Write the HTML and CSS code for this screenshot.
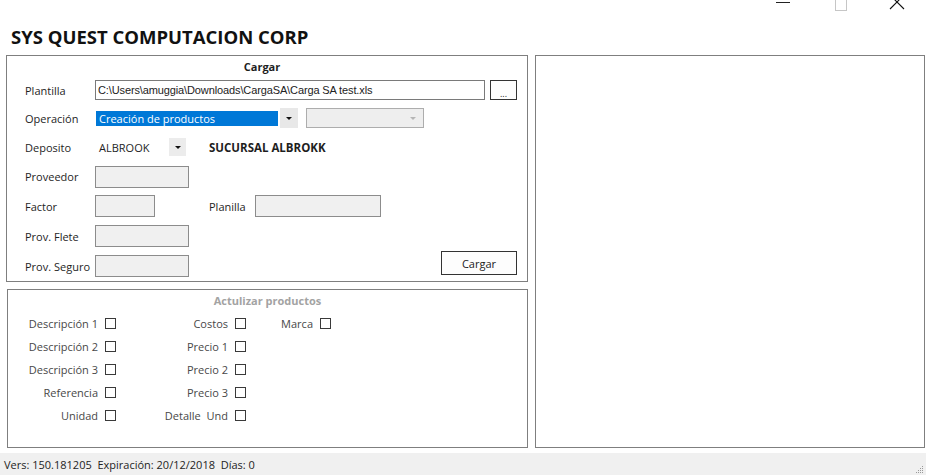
FILE: index.html
```html
<!DOCTYPE html>
<html lang="es">
<head>
    <meta charset="UTF-8">
    <title>Carga SA</title>
    <link rel="stylesheet" href="styles.css">
</head>
<body>
    <div class="caption">
        <div class="ctl"><span class="ctl-min"></span></div>
        <div class="ctl"><span class="ctl-max"></span></div>
        <div class="ctl ctl-last">
            <svg class="ctl-close" width="20" height="13" viewBox="0 0 20 13">
                <path d="M2 -3 L16 11 M16 -3 L2 11" stroke="#111" stroke-width="1.1" fill="none"/>
            </svg>
        </div>
    </div>

    <h1 class="app-title">SYS QUEST COMPUTACION CORP</h1>

    <div class="main">
        <div class="left">
            <div class="group cargar">
                <div class="group-title">Cargar</div>

                <div class="row">
                    <span class="lbl">Plantilla</span>
                    <input class="txt path" type="text" value="C:\Users\amuggia\Downloads\CargaSA\Carga SA test.xls">
                    <button class="btn browse">...</button>
                </div>

                <div class="row">
                    <span class="lbl">Operación</span>
                    <div class="combo op">
                        <span class="combo-sel">Creación de productos</span>
                        <span class="combo-arrow"><i class="tri"></i></span>
                    </div>
                    <div class="combo off">
                        <span class="combo-text"></span>
                        <i class="tri grey"></i>
                    </div>
                </div>

                <div class="row">
                    <span class="lbl">Deposito</span>
                    <div class="combo dep">
                        <span class="combo-text">ALBROOK</span>
                        <span class="combo-arrow"><i class="tri"></i></span>
                    </div>
                    <span class="sucursal">SUCURSAL ALBROKK</span>
                </div>

                <div class="row">
                    <span class="lbl">Proveedor</span>
                    <input class="txt w94" type="text" disabled>
                </div>

                <div class="row">
                    <span class="lbl">Factor</span>
                    <input class="txt w60" type="text" disabled>
                    <span class="lbl planilla">Planilla</span>
                    <input class="txt w126" type="text" disabled>
                </div>

                <div class="row">
                    <span class="lbl">Prov. Flete</span>
                    <input class="txt w94" type="text" disabled>
                </div>

                <div class="row">
                    <span class="lbl">Prov. Seguro</span>
                    <input class="txt w94" type="text" disabled>
                    <button class="btn cargar-btn">Cargar</button>
                </div>
            </div>

            <div class="group actualizar">
                <div class="group-title muted">Actulizar productos</div>
                <div class="checks">
                    <label class="chk">Descripción 1 <span class="box"></span></label>
                    <label class="chk">Costos <span class="box"></span></label>
                    <label class="chk">Marca <span class="box"></span></label>

                    <label class="chk">Descripción 2 <span class="box"></span></label>
                    <label class="chk">Precio 1 <span class="box"></span></label>
                    <span></span>

                    <label class="chk">Descripción 3 <span class="box"></span></label>
                    <label class="chk">Precio 2 <span class="box"></span></label>
                    <span></span>

                    <label class="chk">Referencia <span class="box"></span></label>
                    <label class="chk">Precio 3 <span class="box"></span></label>
                    <span></span>

                    <label class="chk">Unidad <span class="box"></span></label>
                    <label class="chk">Detalle&nbsp; Und <span class="box"></span></label>
                    <span></span>
                </div>
            </div>
        </div>

        <div class="panel"></div>
    </div>

    <div class="status">
        <span>Vers: 150.181205 &nbsp;Expiración: 20/12/2018 &nbsp;Días: 0</span>
        <svg class="grip" width="10" height="10" viewBox="0 0 10 10">
            <rect x="8" y="2" width="1" height="1" fill="#999"/>
            <rect x="6" y="4" width="1" height="1" fill="#999"/>
            <rect x="8" y="4" width="1" height="1" fill="#999"/>
            <rect x="4" y="6" width="1" height="1" fill="#999"/>
            <rect x="6" y="6" width="1" height="1" fill="#999"/>
            <rect x="8" y="6" width="1" height="1" fill="#999"/>
            <rect x="2" y="8" width="1" height="1" fill="#999"/>
            <rect x="4" y="8" width="1" height="1" fill="#999"/>
            <rect x="6" y="8" width="1" height="1" fill="#999"/>
            <rect x="8" y="8" width="1" height="1" fill="#999"/>
        </svg>
    </div>
</body>
</html>
```

FILE: styles.css
```css
body {
    margin: 0;
    padding: 0;
    background-color: #fff;
    font-family: "Open Sans", "Noto Sans", sans-serif;
    font-size: 11px;
    color: #1e1e1e;
    width: 926px;
    height: 475px;
    overflow: hidden;
}

/* window caption buttons */
.caption {
    height: 23px;
    display: flex;
    justify-content: flex-end;
    align-items: flex-start;
}

.ctl {
    width: 58px;
    display: flex;
    justify-content: center;
}

.ctl-last {
    width: 56px;
}

.ctl-min {
    display: block;
    width: 14px;
    height: 1px;
    margin-top: 2px;
    background-color: #222;
}

.ctl-max {
    display: block;
    width: 10px;
    height: 11px;
    margin-top: -2px;
    border: 1px solid #c6c6c6;
}

.ctl-close {
    display: block;
    margin-top: -2px;
}

.app-title {
    margin: 0 0 4px 11px;
    font-size: 18.5px;
    line-height: 28px;
    font-weight: 700;
    color: #111;
}

.main {
    display: flex;
    gap: 7px;
    padding-left: 6px;
    height: 393px;
}

.left {
    width: 522px;
    display: flex;
    flex-direction: column;
    gap: 7px;
}

.group {
    border: 1px solid #7f7f7f;
    box-sizing: border-box;
}

.group-title {
    text-align: center;
    font-weight: 700;
    color: #1e1e1e;
}

.group-title.muted {
    color: #a3a3a3;
}

/* Cargar */
.cargar {
    height: 227px;
    display: grid;
    grid-template-rows: 20px 28px 28px 30px 29px 30px 30px 30px;
    padding-right: 10px;
}

.cargar .group-title {
    line-height: 20px;
    padding-top: 1px;
}

.row {
    display: flex;
    align-items: center;
    padding-left: 18px;
}

.lbl {
    width: 70px;
    flex-shrink: 0;
}

.lbl.planilla {
    width: 46px;
    margin-left: 54px;
}

.txt {
    box-sizing: border-box;
    height: 22px;
    margin: 0;
    padding: 0 3px;
    border: 1px solid #8c8c8c;
    background-color: #f0f0f0;
    font-family: inherit;
    font-size: 11px;
}

.txt.path {
    width: 390px;
    height: 20px;
    background-color: #fff;
    border-color: #7a7a7a;
    font-family: "Liberation Sans", Arial, sans-serif;
    font-size: 11px;
    letter-spacing: -0.12px;
    color: #222;
    padding-left: 2px;
}

.w94 {
    width: 94px;
}

.w60 {
    width: 60px;
}

.w126 {
    width: 126px;
}

.btn {
    box-sizing: border-box;
    margin: 0;
    padding: 0;
    border: 1px solid #333;
    background-color: #fdfdfd;
    font-family: inherit;
    font-size: 11px;
    color: #222;
}

.browse {
    width: 27px;
    height: 20px;
    margin-left: 5px;
    font-size: 9px;
    line-height: 20px;
    padding-top: 3px;
}

.cargar-btn {
    width: 76px;
    height: 24px;
    margin-left: auto;
    align-self: flex-start;
}

.combo {
    display: flex;
    align-items: center;
    height: 20px;
    box-sizing: border-box;
}

.combo.op {
    width: 203px;
}

.combo-sel {
    width: 182px;
    height: 15px;
    margin: 1px 2px 0 1px;
    padding-left: 3px;
    box-sizing: border-box;
    background-color: #0078d7;
    color: #fff;
    line-height: 15px;
    white-space: nowrap;
}

.combo-arrow {
    width: 18px;
    height: 20px;
    background-color: #e8e8e8;
    display: flex;
    align-items: center;
    justify-content: center;
}

.tri {
    display: block;
    width: 0;
    height: 0;
    border-left: 3px solid transparent;
    border-right: 3px solid transparent;
    border-top: 3px solid #111;
}

.tri.grey {
    border-top-color: #b5b5b5;
    margin-right: 7px;
}

.combo.off {
    width: 118px;
    margin-left: 8px;
    border: 1px solid #adadad;
    background-color: #eeeeee;
}

.combo.off .combo-text {
    flex: 1;
}

.combo.dep {
    width: 92px;
}

.combo.dep .combo-text {
    flex: 1;
    padding-left: 4px;
}

.combo.dep .combo-arrow {
    width: 17px;
    height: 18px;
    margin-right: 1px;
    background-color: #ececec;
}

.sucursal {
    margin-left: 22px;
    font-weight: 700;
    font-size: 11.5px;
}

/* Actualizar productos */
.actualizar {
    height: 159px;
    margin-left: 1px;
}

.actualizar .group-title {
    line-height: 22px;
}

.checks {
    display: grid;
    grid-template-columns: 108px 130px 85px;
    grid-auto-rows: 23px;
}

.chk {
    display: flex;
    justify-content: flex-end;
    align-items: center;
    gap: 7px;
    color: #484848;
    white-space: nowrap;
}

.box {
    display: block;
    width: 11px;
    height: 11px;
    box-sizing: border-box;
    border: 1px solid #3a3a3a;
    background-color: #fff;
}

.panel {
    width: 390px;
    height: 393px;
    box-sizing: border-box;
    border: 1px solid #7f7f7f;
}

/* status bar */
.status {
    margin-top: 5px;
    height: 22px;
    background-color: #f0f0f0;
    display: flex;
    align-items: center;
    justify-content: space-between;
    padding-left: 4px;
    font-size: 11px;
    color: #1e1e1e;
}

.grip {
    align-self: flex-end;
    margin-right: 2px;
    margin-bottom: 1px;
}
```
